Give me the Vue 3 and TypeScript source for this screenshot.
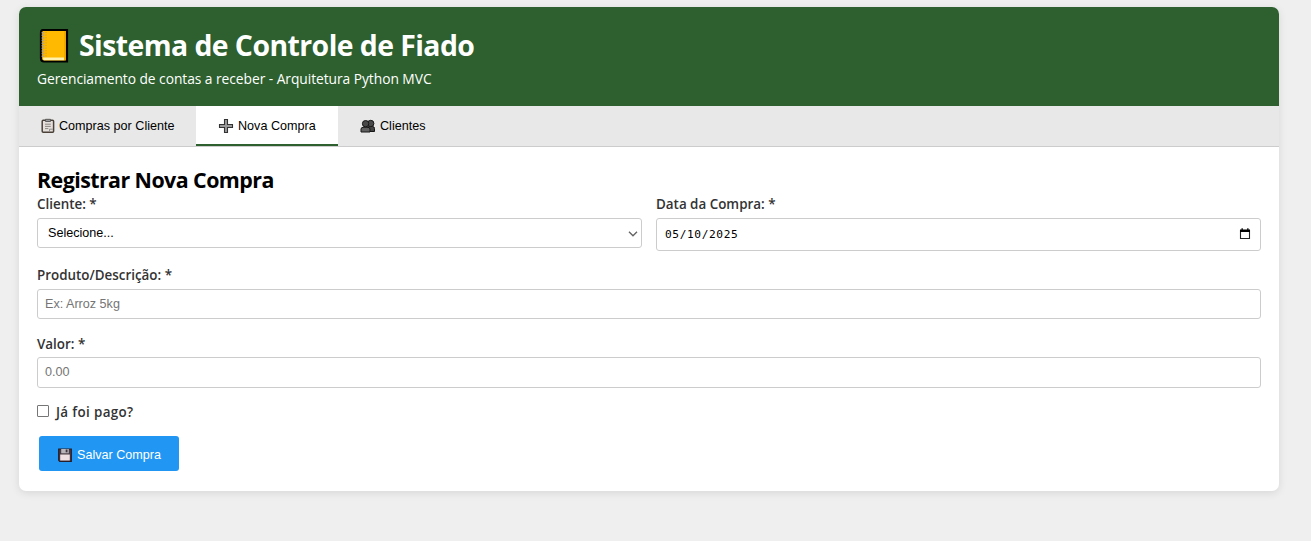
<script setup lang="ts">
import { ref } from 'vue'

type TabId = 'compras' | 'nova' | 'clientes'

const tabs: { id: TabId; label: string }[] = [
  { id: 'compras', label: 'Compras por Cliente' },
  { id: 'nova', label: 'Nova Compra' },
  { id: 'clientes', label: 'Clientes' },
]
const active = ref<TabId>('nova')
const cliente = ref('')
const data = ref('05/10/2025')
const produto = ref('')
const valor = ref('')
const pago = ref(false)
</script>

<template>
  <div class="container">
    <header class="header">
      <h1 class="title">
        <svg class="book" viewBox="0 0 30 34" width="30" height="34">
          <path d="M4 1H28V32.5H5Q2 32.5 2 29.5V4Q2 1 4 1Z" fill="#ffb900" stroke="#000" stroke-width="2.2" />
          <path d="M4 28.5H25.5V31.2H5Q4 31 4 28.5Z" fill="#fff2b0" />
          <path d="M25.5 2.2V31" stroke="#f7a600" stroke-width="1" />
          <path d="M4 3V28" stroke="#b5a384" stroke-width="2.8" stroke-dasharray="1.5 1.1" />
          <path d="M7 3V28" stroke="#e09a00" stroke-width="1" stroke-dasharray="1 1.6" />
        </svg>
        <span class="title-text">Sistema de Controle de Fiado</span>
      </h1>
      <p class="subtitle">Gerenciamento de contas a receber - Arquitetura Python MVC</p>
    </header>

    <nav class="tabs">
      <button
        v-for="tab in tabs"
        :key="tab.id"
        type="button"
        class="tab"
        :class="[tab.id, { active: active === tab.id }]"
        @click="active = tab.id"
      >
        <svg v-if="tab.id === 'compras'" class="tab-icon" viewBox="0 0 16 16" width="16" height="16">
          <rect x="2.2" y="2.2" width="11.4" height="12" rx="1" fill="#e4dfda" stroke="#4b4139" stroke-width="1.5" />
          <path d="M5.5 1.3H10.5V3.5H5.5Z" fill="#999" stroke="#555" stroke-width=".9" />
          <path d="M5 6.2H10.8M5 8.4H10.8M5 10.6H8.3" stroke="#8d8781" stroke-width="1" />
          <path d="M9.5 13.5V11.2H12.8" fill="none" stroke="#888" stroke-width=".9" />
        </svg>
        <svg v-else-if="tab.id === 'nova'" class="tab-icon" viewBox="0 0 16 16" width="16" height="16">
          <path d="M6.5 1.5H9.5V6.5H14.5V9.5H9.5V14.5H6.5V9.5H1.5V6.5H6.5Z" fill="#9a9a9a" stroke="#333" stroke-width="1.1" />
        </svg>
        <svg v-else class="tab-icon" viewBox="0 0 16 16" width="16" height="16">
          <path d="M7.5 12.5V10Q7.5 8.5 9.5 8.5H12.5Q14.5 8.5 14.5 10.5V13.5H9Z" fill="#444" stroke="#161616" stroke-width="1" />
          <circle cx="10.7" cy="5.5" r="3.2" fill="#4a4a4a" stroke="#161616" stroke-width="1" />
          <circle cx="5.6" cy="5.7" r="3.2" fill="#484848" stroke="#161616" stroke-width="1" />
          <path d="M1 14V11.3Q1 9.3 3 9.3H8Q10 9.3 10 11.3V14Z" fill="#606060" stroke="#161616" stroke-width="1" />
        </svg>
        <span>{{ tab.label }}</span>
      </button>
    </nav>

    <main class="content">
      <h2 class="heading">Registrar Nova Compra</h2>
      <form @submit.prevent>
        <div class="row">
          <div class="group">
            <label class="label" for="cliente">Cliente: *</label>
            <div class="field-wrap">
              <select id="cliente" v-model="cliente" class="field select">
                <option value="">Selecione...</option>
              </select>
              <svg class="chevron" viewBox="0 0 10 6" width="10" height="6">
                <path d="M1 .8L5 4.8L9 .8" fill="none" stroke="#666" stroke-width="1.4" />
              </svg>
            </div>
          </div>
          <div class="group">
            <label class="label" for="data">Data da Compra: *</label>
            <div class="field-wrap">
              <input id="data" v-model="data" type="text" class="field date" />
              <svg class="calendar" viewBox="0 0 12 12" width="12" height="12">
                <path d="M1.5 2.5H10.5V10.5H1.5Z" fill="none" stroke="#222" stroke-width="1.1" />
                <path d="M1 1.5H11V4H1ZM2.5 .3H3.8V2H2.5ZM8.2 .3H9.5V2H8.2Z" fill="#000" />
              </svg>
            </div>
          </div>
        </div>
        <div class="group produto">
          <label class="label" for="produto">Produto/Descrição: *</label>
          <input id="produto" v-model="produto" type="text" class="field" placeholder="Ex: Arroz 5kg" />
        </div>
        <div class="group valor">
          <label class="label" for="valor">Valor: *</label>
          <input id="valor" v-model="valor" type="text" class="field" placeholder="0.00" />
        </div>
        <label class="check">
          <input v-model="pago" type="checkbox" class="box" />
          <span class="check-text">Já foi pago?</span>
        </label>
        <button type="submit" class="save">
          <svg class="disk" viewBox="0 0 16 16" width="16" height="16">
            <path d="M1.7 2H14.3V14.3H2.7L1.7 13.3Z" fill="#493b45" stroke="#251e2a" stroke-width="1.2" />
            <rect x="4.2" y="2" width="7.6" height="4.3" fill="#b9b4b9" />
            <rect x="8.7" y="2.5" width="1.8" height="2.8" fill="#40343f" />
            <rect x="3.2" y="7.5" width="9.6" height="6" fill="#efdfe2" />
          </svg>
          <span>Salvar Compra</span>
        </button>
      </form>
    </main>
  </div>
</template>

<style>
html,
body {
  background: #efefef;
  margin: 0;
}
#app {
  display: flow-root;
  min-height: 541px;
}
</style>

<style scoped>
* {
  box-sizing: border-box;
}
.container {
  width: 1260px;
  height: 484px;
  margin: 7px 0 0 19px;
  background: #fff;
  border-radius: 7px;
  overflow: hidden;
  box-shadow: 0 2px 9px rgba(0, 0, 0, 0.1);
  font-family: 'Open Sans', 'Noto Sans', sans-serif;
}
.header {
  height: 99px;
  padding: 18px 18px 0;
  background: #2d602e;
  color: #fff;
}
.title {
  display: flex;
  align-items: center;
  height: 41px;
  margin: 0;
  padding-left: 2px;
  font-size: 28.4px;
  font-weight: 700;
  line-height: 41px;
  white-space: nowrap;
}
.book {
  margin: 1px 10px 0 0;
}
.title-text {
  letter-spacing: -0.56px;
}
.subtitle {
  margin: 3px 0 0;
  font-size: 13.8px;
  line-height: 20px;
  letter-spacing: -0.05px;
}
.tabs {
  display: flex;
  height: 41px;
  background: #e8e8e8;
  border-bottom: 1px solid #ccc;
}
.tab {
  display: flex;
  align-items: center;
  height: 40px;
  padding: 0 0 1px 21px;
  border: 0;
  background: none;
  font-family: 'Liberation Sans', Arial, sans-serif;
  font-size: 12.6px;
  color: #000;
  white-space: nowrap;
}
.tab.compras {
  width: 177px;
}
.tab.nova {
  width: 142px;
  padding-left: 22px;
}
.tab.clientes {
  padding-left: 22px;
}
.tab.active {
  background: #fff;
  border-bottom: 2px solid #2d602e;
  padding-top: 1px;
  padding-bottom: 0;
}
.tab-icon {
  margin-right: 4px;
}
.compras .tab-icon {
  margin-right: 3px;
}
.content {
  padding: 18px;
}
.heading {
  height: 31px;
  margin: 0;
  font-size: 21.4px;
  font-weight: 700;
  line-height: 30px;
  letter-spacing: -0.56px;
  color: #000;
}
.row {
  display: flex;
  gap: 14px;
  height: 69px;
}
.row .group {
  flex: 1;
}
.group {
  display: flex;
  flex-direction: column;
}
.label,
.check {
  font-size: 13.4px;
  font-weight: 600;
  color: #333;
  white-space: nowrap;
}
.label {
  height: 22px;
  line-height: 17px;
}
.field-wrap {
  display: flex;
  align-items: center;
}
.field {
  width: 100%;
  height: 30px;
  margin: 0;
  padding: 0 7px 1px;
  border: 1px solid #ccc;
  border-radius: 3px;
  background: #fff;
  font-family: 'Liberation Sans', Arial, sans-serif;
  font-size: 12.6px;
  color: #000;
  appearance: none;
  outline: none;
}
.field::placeholder {
  color: #757575;
  opacity: 1;
}
.select {
  padding-left: 10px;
}
.chevron {
  flex: none;
  margin: 2px 4px 0 -14px;
}
.date {
  height: 33px;
  padding-top: 1px;
  padding-left: 8px;
  font-family: 'DejaVu Sans Mono', monospace;
  font-size: 11.2px;
  letter-spacing: 0.6px;
}
.calendar {
  flex: none;
  margin: 0 10px 1px -22px;
}
.produto {
  margin-top: 2px;
  height: 69px;
}
.valor .field {
  height: 31px;
}
.valor .label {
  height: 21px;
}
.check {
  display: flex;
  align-items: center;
  height: 18px;
  margin-top: 15px;
}
.check-text {
  letter-spacing: 0.35px;
}
.box {
  width: 12px;
  height: 12px;
  margin: 0 7px 2px 0;
  border: 1px solid #767676;
  border-radius: 1px;
  background: #fff;
  appearance: none;
}
.box:checked {
  background: #2196f3;
}
.save {
  display: flex;
  align-items: center;
  width: 140px;
  height: 35px;
  margin: 15px 0 0 2px;
  padding: 2px 0 0 18px;
  border: 0;
  border-radius: 3px;
  background: #2196f3;
  color: #fff;
  font-family: 'Liberation Sans', Arial, sans-serif;
  font-size: 12.6px;
  white-space: nowrap;
}
.disk {
  margin-right: 4px;
}
</style>
